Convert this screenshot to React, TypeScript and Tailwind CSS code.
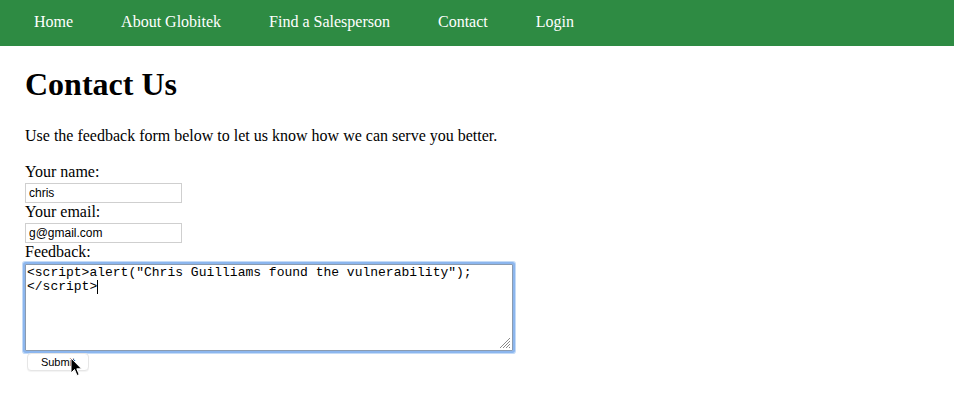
import React from "react";

export default function App() {
  const links = ["Home", "About Globitek", "Find a Salesperson", "Contact", "Login"];
  return (
    <div className="min-h-[413px] bg-white text-black font-['Liberation_Serif',serif]">
      <nav className="h-[46px] bg-[#2e8b43] flex items-center pl-[34px] gap-[48px] text-white text-[16px] leading-[18px] pb-[3px]">
        {links.map((l) => (
          <a key={l} className="whitespace-nowrap">
            {l}
          </a>
        ))}
      </nav>
      <main className="px-[25px]">
        <h1 className="mt-[20px] text-[32px] font-bold leading-[37px]">Contact Us</h1>
        <p className="mt-[24px] text-[16px] leading-[18px]">
          Use the feedback form below to let us know how we can serve you better.
        </p>
        <form className="mt-[18px] flex flex-col items-start text-[16px] leading-[18px]">
          <label className="block h-[18px]">Your name:</label>
          <input
            readOnly
            value="chris"
            className="mt-[2px] h-[20px] w-[157px] border border-[#cfcfcf] px-[3px] text-[12px] font-['Liberation_Sans',Arial,sans-serif] outline-none"
          />
          <label className="block h-[18px]">Your email:</label>
          <input
            readOnly
            value="g@gmail.com"
            className="mt-[2px] h-[20px] w-[157px] border border-[#cfcfcf] px-[3px] text-[12px] font-['Liberation_Sans',Arial,sans-serif] outline-none"
          />
          <label className="block h-[18px]">Feedback:</label>
          <div className="relative mt-[3px] h-[87px] w-[488px] border border-[#8a9bb0] rounded-[1px] shadow-[0_0_0_2px_#8cb6ee,0_0_0_3px_#c4dbf7] bg-white px-[1px] pt-[1px] font-['Liberation_Mono','Courier_New',monospace] text-[13px] leading-[14px] whitespace-pre">
            <div>{'<script>alert("Chris Guilliams found the vulnerability");'}</div>
            <div>
              {"</script>"}
              <span className="inline-block w-px h-[14px] bg-black align-top" />
            </div>
            <svg className="absolute right-[2px] bottom-[2px]" width="12" height="12" viewBox="0 0 12 12">
              <g stroke="#8a8a8a" strokeWidth="1">
                <line x1="2" y1="12" x2="12" y2="2" />
                <line x1="5" y1="12" x2="12" y2="5" />
                <line x1="8" y1="12" x2="12" y2="8" />
                <line x1="11" y1="12" x2="12" y2="11" />
              </g>
            </svg>
          </div>
          <div className="relative mt-[1px] ml-[2px]">
            <button
              type="button"
              className="h-[18px] w-[62px] rounded-[4px] border border-[#e6e6e6] bg-white shadow-[0_1px_1px_rgba(0,0,0,0.05)] text-[11px] leading-[16px] text-black font-['Liberation_Sans',Arial,sans-serif]"
            >
              Submit
            </button>
            <svg className="absolute left-[43px] top-[5px]" width="13" height="21" viewBox="0 0 13 21">
              <path
                d="M1 1 L1 16 L4.5 12.5 L7 18.5 L9.2 17.6 L6.8 11.8 L11.5 11.8 Z"
                fill="#000"
                stroke="#fff"
                strokeWidth="1"
                strokeLinejoin="round"
              />
            </svg>
          </div>
        </form>
      </main>
    </div>
  );
}
